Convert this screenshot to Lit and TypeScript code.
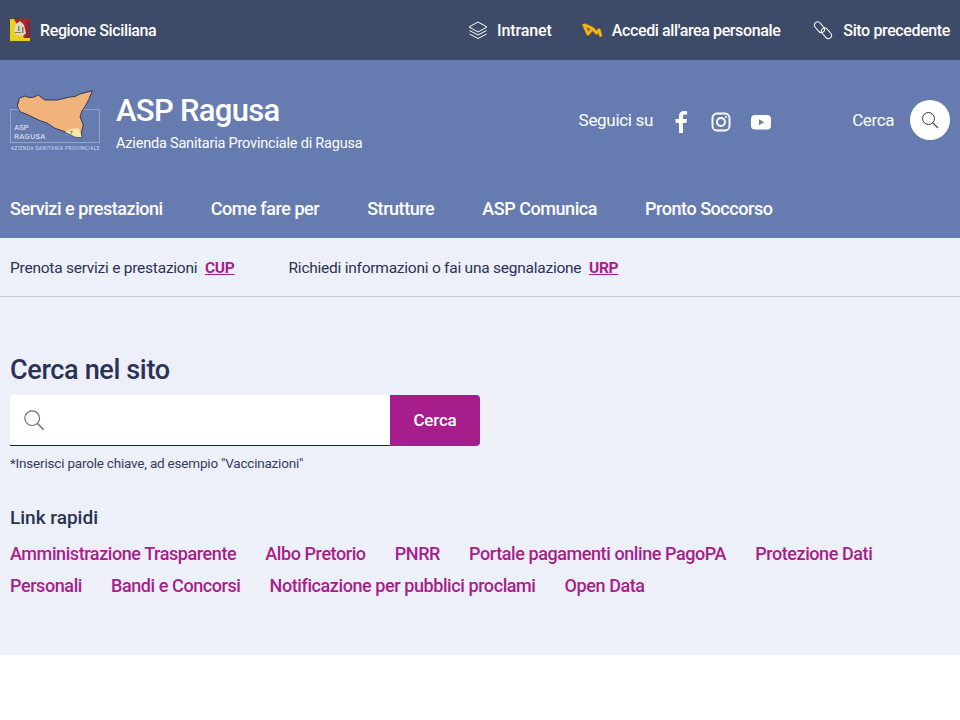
import { LitElement, html, css, svg } from "lit";
import { customElement } from "lit/decorators.js";

const searchIcon = (size: number, color: string) => html`<svg width=${size} height=${size} viewBox="0 0 24 24" fill="none" stroke=${color} stroke-width="1.3">
  <circle cx="10" cy="10" r="8"></circle>
  <path d="M15.8 15.8 L22.5 22.5" stroke-width="1.6"></path>
</svg>`;

// outline of the island, in the logo's own coordinates
const sicily = "17.3,106 19.3,98.3 25,96 29,97.500 33.3,97.3 38.3,95 42,98 45,100 56.7,100 62,99 68.3,97.3 75,96.500 80,94 92.3,90.7 89.3,98.3 85,106.7 82,111 80,116.7 83.3,125 81.700,131 81.7,137.3 75,136.7 65,131.700 55,128.300 47,123 40,120.700 28.300,115 20,111.700";

@customElement("app-root")
export class AppRoot extends LitElement {
  static styles = css`
    :host {
      display: block;
      font-family: Roboto, "Noto Sans", sans-serif;
      background: #fff;
      min-height: 720px;
    }
    a {
      text-decoration: none;
      color: inherit;
    }
    .topbar {
      height: 60px;
      box-sizing: border-box;
      padding: 0 10px 0 9px;
      background: #3d4a68;
      color: #fff;
      display: flex;
      align-items: center;
      justify-content: space-between;
      font-size: 16px;
      font-weight: 500;
      letter-spacing: -0.38px;
    }
    .tool {
      display: flex;
      align-items: center;
      gap: 10px;
    }
    .tool svg {
      display: block;
    }
    .home {
      gap: 9px;
    }
    .intranet {
      gap: 9px;
      letter-spacing: -0.1px;
    }
    .previous {
      margin-left: 3px;
    }
    .tools {
      display: flex;
      align-items: center;
      gap: 30px;
    }
    .header {
      height: 178px;
      background: #667bb0;
      color: #fff;
      padding: 0 10px;
      box-sizing: border-box;
    }
    .brand-row {
      height: 120px;
      display: flex;
      align-items: center;
    }
    .brand {
      display: flex;
      align-items: center;
      gap: 16px;
      flex: 1;
    }
    .logo {
      display: block;
    }
    .names {
      padding-top: 2px;
    }
    .title {
      font-size: 31px;
      font-weight: 500;
      line-height: 38px;
      letter-spacing: -0.7px;
      padding-top: 3px;
    }
    .subtitle {
      font-size: 14.5px;
      line-height: 20px;
      margin-top: 4px;
      letter-spacing: -0.2px;
    }
    .social {
      display: flex;
      align-items: center;
      font-size: 17px;
      letter-spacing: -0.3px;
      margin-right: 79px;
    }
    .social span {
      margin-right: 16px;
    }
    .social svg {
      display: block;
      width: 24px;
      height: 24px;
    }
    .icons {
      display: flex;
      gap: 16px;
      margin-top: 4px;
    }
    .find {
      display: flex;
      align-items: center;
      gap: 16px;
      font-size: 17px;
      letter-spacing: -0.4px;
    }
    .round {
      width: 40px;
      height: 40px;
      border-radius: 50%;
      background: #fff;
      display: flex;
      align-items: center;
      justify-content: center;
    }
    .nav {
      display: flex;
      gap: 48px;
      font-size: 18px;
      font-weight: 500;
      line-height: 24px;
      padding-top: 17px;
      letter-spacing: -0.45px;
    }
    .notice {
      height: 59px;
      box-sizing: border-box;
      padding: 1px 10px 0;
      background: #edf0f8;
      border-bottom: 1px solid #c8c8d6;
      display: flex;
      align-items: center;
      gap: 54px;
      font-size: 15.5px;
      letter-spacing: -0.24px;
      color: #2b3255;
    }
    .notice a {
      color: #a71d8c;
      font-weight: 700;
      text-decoration: underline;
      margin-left: 4px;
    }
    .main {
      height: 358px;
      box-sizing: border-box;
      background: #edf0f8;
      padding: 55px 10px 0;
      color: #2b3255;
    }
    h2 {
      margin: 0;
      font-size: 27px;
      font-weight: 500;
      line-height: 36px;
      letter-spacing: -0.35px;
    }
    .search {
      display: flex;
      margin-top: 7px;
      width: 470px;
    }
    .input {
      width: 380px;
      height: 51px;
      box-sizing: border-box;
      background: #fff;
      border-bottom: 1px solid #1d2340;
      padding-left: 13px;
      display: flex;
      align-items: center;
    }
    .go {
      width: 90px;
      height: 51px;
      box-sizing: border-box;
      padding-bottom: 2px;
      background: #a71d8c;
      color: #fff;
      border-radius: 0 4px 4px 0;
      display: flex;
      align-items: center;
      justify-content: center;
      font-size: 17px;
      font-weight: 500;
      letter-spacing: -0.2px;
    }
    .hint {
      font-size: 13.5px;
      letter-spacing: -0.2px;
      line-height: 20px;
      margin-top: 7px;
      color: #363c5c;
    }
    h3 {
      margin: 33px 0 0;
      font-size: 19px;
      font-weight: 500;
      line-height: 24px;
    }
    .links {
      margin-top: 8px;
      font-size: 18px;
      letter-spacing: -0.42px;
      line-height: 32px;
      font-weight: 500;
      color: #a71d8c;
      width: 930px;
    }
    .links a {
      margin-right: 25px;
    }
  `;

  render() {
    const nav = ["Servizi e prestazioni", "Come fare per", "Strutture", "ASP Comunica", "Pronto Soccorso"];
    const links = [
      "Amministrazione Trasparente",
      "Albo Pretorio",
      "PNRR",
      "Portale pagamenti online PagoPA",
      "Protezione Dati Personali",
      "Bandi e Concorsi",
      "Notificazione per pubblici proclami",
      "Open Data",
    ];
    const zigzag = "M1.500 2 L6 12 L10.500 6.500 L14.500 11 L17 8 L19 14.500 M3 3 L10.500 6.500";
    return html`
      <div class="topbar">
        <a class="tool home" href="#">
          <svg width="22" height="24" viewBox="0 0 22 24">
            <rect width="22" height="24" fill="#4a4a3c"></rect>
            <rect x="1" y="1" width="20" height="22" fill="#e6d020"></rect>
            <path d="M5 1H21V20H15Z" fill="#b3202f"></path>
            <rect x="17" y="3" width="4" height="17" fill="#8a2446"></rect>
            <path d="M7 6l4-3 4 4 2 8-3 3-7-1-2-5z" fill="#dcdac4"></path>
            <path d="M9 8h1.500v5H9zM13 9h1.500v6H13zM6 14h6v1H6z" fill="#8a7a5c"></path>
          </svg>
          Regione Siciliana
        </a>
        <div class="tools">
          <a class="tool intranet" href="#">
            <svg width="20" height="20" viewBox="0 0 20 20" fill="none" stroke="#fff" stroke-width="1">
              <path d="M10 2 L19 7 L10 12 L1 7Z"></path>
              <path d="M1.500 10.500 L10 15 L18.500 10.500"></path>
              <path d="M1.500 14 L10 18.500 L18.500 14"></path>
            </svg>
            Intranet
          </a>
          <a class="tool" href="#">
            <svg width="20" height="16" viewBox="0 0 20 16" fill="none" stroke-linejoin="round">
              <path d=${zigzag} stroke="#a8761c" stroke-width="3.800"></path>
              <path d=${zigzag} stroke="#f2b818" stroke-width="2.400"></path>
            </svg>
            Accedi all'area personale
          </a>
          <a class="tool previous" href="#">
            <svg width="20" height="20" viewBox="0 0 20 20" fill="none" stroke="#fff" stroke-width="1">
              <rect x="0.500" y="4" width="12" height="6.500" rx="3.250" transform="rotate(50 6.500 7.250)"></rect>
              <rect x="7.500" y="10" width="12" height="6.500" rx="3.250" transform="rotate(50 13.500 13.250)"></rect>
            </svg>
            Sito precedente
          </a>
        </div>
      </div>

      <div class="header">
        <div class="brand-row">
          <div class="brand">
            <svg class="logo" width="90" height="60" viewBox="10 90 90 60">
              <rect x="10.500" y="109.700" width="89" height="33" fill="none" stroke="#b4c0dc" stroke-width="0.600"></rect>
              <polygon points=${sicily} fill="#f2b27c" stroke="#27304a" stroke-width="0.900"></polygon>
              <polygon points="65,131.700 72,128.500 79,128.500 81.700,137.300 75,136.700" fill="#f8e8a8"></polygon>
              ${svg`<text x="14.300" y="130" font-size="7.600" fill="#e8ecf6">ASP</text>
              <text x="14.300" y="138.700" font-size="7.600" fill="#e8ecf6" textLength="31">RAGUSA</text>
              <text x="11" y="149.500" font-size="4.800" fill="#d8deee" textLength="88.500">AZIENDA SANITARIA PROVINCIALE</text>
              <text x="69.500" y="135" font-size="5.500" fill="#333">7</text>`}
            </svg>
            <div class="names">
              <div class="title">ASP Ragusa</div>
              <div class="subtitle">Azienda Sanitaria Provinciale di Ragusa</div>
            </div>
          </div>
          <div class="social">
            <span>Seguici su</span>
            <div class="icons">
              <svg viewBox="0 0 24 24" fill="#fff"><path d="M14 23V13h3.400l.6-4h-4V6.600c0-1.200.4-2 2-2h2.100V1.200C17.700 1.100 16.600 1 15.300 1 12.200 1 10 2.900 10 6.200V9H6.600v4H10v10z"></path></svg>
              <svg viewBox="0 0 24 24" fill="none" stroke="#fff" stroke-width="1.900"><rect x="3.500" y="3.500" width="17" height="17" rx="4.500"></rect><circle cx="12" cy="12" r="4"></circle><circle cx="17" cy="7" r="1" fill="#fff" stroke="none"></circle></svg>
              <svg viewBox="0 0 24 24"><rect x="2" y="5" width="20" height="14.500" rx="4" fill="#fff"></rect><path d="M10 9.200 L15 12.200 L10 15.200Z" fill="#667bb0"></path></svg>
            </div>
          </div>
          <div class="find">
            Cerca
            <div class="round">${searchIcon(18, "#2b3255")}</div>
          </div>
        </div>
        <div class="nav">
          ${nav.map((n) => html`<a href="#">${n}</a>`)}
        </div>
      </div>

      <div class="notice">
        <div>Prenota servizi e prestazioni <a href="#">CUP</a></div>
        <div>Richiedi informazioni o fai una segnalazione <a href="#">URP</a></div>
      </div>

      <div class="main">
        <h2>Cerca nel sito</h2>
        <div class="search">
          <div class="input">${searchIcon(22, "#6b7080")}</div>
          <div class="go">Cerca</div>
        </div>
        <div class="hint">*Inserisci parole chiave, ad esempio "Vaccinazioni"</div>
        <h3>Link rapidi</h3>
        <div class="links">
          ${links.map((l) => html`<a href="#">${l}</a> `)}
        </div>
      </div>
    `;
  }
}
